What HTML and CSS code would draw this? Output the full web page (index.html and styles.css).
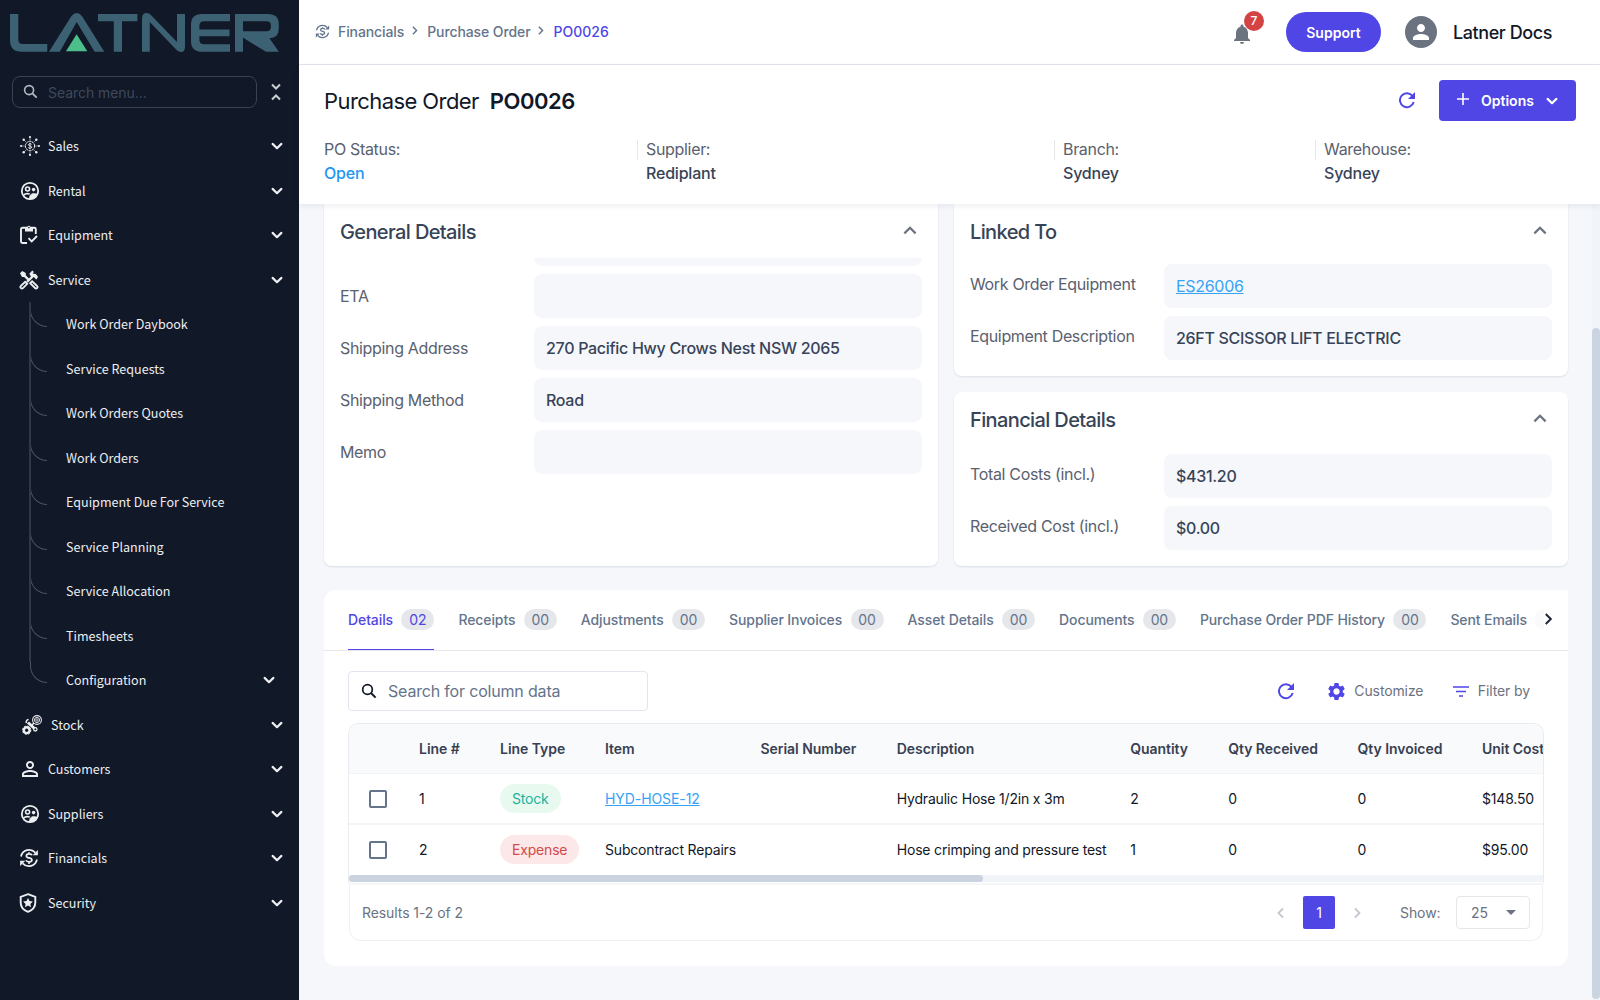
FILE: index.html
```html
<!DOCTYPE html>
<html lang="en">
<head>
<meta charset="utf-8">
<title>Purchase Order PO0026</title>
<link rel="stylesheet" href="styles.css">
</head>
<body>
<svg class="sprite" aria-hidden="true">
  <symbol id="i-down" viewBox="0 0 16 16"><path d="M3.6 5.9 8 10.2l4.400-4.300" fill="none" stroke="currentColor" stroke-width="2.200" stroke-linecap="round" stroke-linejoin="round"/></symbol>
  <symbol id="i-up" viewBox="0 0 16 16"><path d="M3 11l5-5 5 5" fill="none" stroke="currentColor" stroke-width="2"/></symbol>
  <symbol id="i-right" viewBox="0 0 16 16"><path d="M6 3.500 10.500 8 6 12.500" fill="none" stroke="currentColor" stroke-width="1.800"/></symbol>
  <symbol id="i-left" viewBox="0 0 16 16"><path d="M10 3.500 5.500 8l4.500 4.500" fill="none" stroke="currentColor" stroke-width="1.800"/></symbol>
  <symbol id="i-search" viewBox="0 0 16 16"><circle cx="6.500" cy="6.500" r="4.800" fill="none" stroke="currentColor" stroke-width="1.700"/><path d="m10 10 4.600 4.600" stroke="currentColor" stroke-width="2"/></symbol>
  <symbol id="i-refresh" viewBox="0 0 18 18"><path d="M14.600 5A7 7 0 1 0 15.700 11" fill="none" stroke="currentColor" stroke-width="2"/><path d="M17 1v7h-7z" fill="currentColor"/></symbol>
  <symbol id="i-people" viewBox="0 0 20 20"><circle cx="10" cy="10" r="8.200" fill="none" stroke="currentColor" stroke-width="1.800"/><circle cx="7.600" cy="8" r="2" fill="none" stroke="currentColor" stroke-width="1.600"/><circle cx="13.600" cy="8.600" r="1.800" fill="currentColor"/><path d="M9.400 18c-.3-3.400 1.600-5.600 4.200-5.600 1.500 0 2.800.3 3.900.9-1.500 2.900-4.400 4.700-8.100 4.700z" fill="currentColor" stroke="currentColor" stroke-width=".6"/><path d="M3.500 14.200c1.500-1.600 4-1.800 6.300-1.200" fill="none" stroke="currentColor" stroke-width="1.600"/></symbol>
  <symbol id="i-clip" viewBox="0 0 20 20"><path d="M8 18H3.400A1.400 1.400 0 0 1 2 16.600V4.200A1.400 1.400 0 0 1 3.400 2.800h12a1.400 1.400 0 0 1 1.400 1.400V9" fill="none" stroke="currentColor" stroke-width="1.900"/><path d="M6 2h2.300a1.700 1.700 0 0 1 3.200 0H14v4.500H6z" fill="currentColor"/><circle cx="9.900" cy="2.600" r=".8" fill="#111827"/><path d="m9.500 13.200 3.200 3.200 5.300-5.400" fill="none" stroke="currentColor" stroke-width="1.900"/></symbol>
  <symbol id="i-tools" viewBox="0 0 20 20"><path d="M1 3.300 3.200 1l3.600 2v2.300l3.600 3.600-1.700 1.700-3.600-3.600H3z" fill="currentColor"/><path d="M8 12 14 6" stroke="currentColor" stroke-width="2.400"/><path d="m10.300 3.800 3-3.300 1.600 1.400L13.600 3.400l1 .3L16.800 4l2.200 2.800-1.500 2.600-1.400-.9-1.100-1.500-2.200.5-.900-.9z" fill="currentColor"/><path d="m1.800 16 4.400-4.200 2 2-4.200 4.200a1.450 1.450 0 0 1-2.200-2zM11.200 13.200l1.900-1.900 5 4.700a1.450 1.450 0 0 1-2.100 2z" fill="none" stroke="currentColor" stroke-width="1.800"/></symbol>
  <symbol id="i-sales" viewBox="0 0 20 20"><g fill="none" stroke="currentColor"><circle cx="10" cy="10" r="4.600" stroke-width="1" stroke-dasharray="2.400 .5"/><path d="M10 5V2M10 15v3M5 10H2M15 10h3M6.500 6.500 4 4M13.500 6.500 16 4M6.500 13.500 4 16M13.500 13.500 16 16" stroke-width=".5"/><path d="M11.600 8.300c-.5-.8-3.100-.9-3.200.4 0 1.500 3.300.9 3.300 2.500 0 1.500-2.900 1.400-3.500.4M10 6.700v6.600" stroke-width=".9"/></g><g fill="currentColor"><circle cx="10" cy="1.100" r="1.100"/><circle cx="10" cy="18.900" r="1.100"/><circle cx="1.100" cy="10" r="1.100"/><circle cx="18.900" cy="10" r="1.100"/><circle cx="3.700" cy="3.700" r="1.200"/><circle cx="16.300" cy="3.700" r="1.200"/><circle cx="3.700" cy="16.300" r="1.200"/><circle cx="16.300" cy="16.300" r="1.200"/></g></symbol>
  <symbol id="i-stock" viewBox="0 0 20 20"><circle cx="4.700" cy="15.200" r="2.900" fill="none" stroke="currentColor" stroke-width="2.400"/><circle cx="4.700" cy="15.200" r="4.200" fill="none" stroke="currentColor" stroke-width="1" stroke-dasharray="1.700 1.600"/><path d="m6 7.500 6.500 6" stroke="currentColor" stroke-width="3"/><path d="M4.600 8.200a2.300 2.300 0 0 1 2-3.600" fill="none" stroke="currentColor" stroke-width="1.500"/><circle cx="13.300" cy="14.300" r="1.700" fill="none" stroke="currentColor" stroke-width="1.300"/><circle cx="15" cy="5" r="4.400" fill="none" stroke="currentColor" stroke-width="1.100"/><circle cx="15" cy="5" r="2.600" fill="none" stroke="currentColor" stroke-width=".9"/><circle cx="15" cy="5" r="1.200" fill="none" stroke="currentColor" stroke-width=".8"/><path d="m12 8-3 3" stroke="currentColor" stroke-width="1.500"/></symbol>
  <symbol id="i-person" viewBox="4 4 16 16"><path fill="currentColor" d="M12 5.900c1.160 0 2.100.94 2.100 2.100s-.94 2.100-2.100 2.100S9.900 9.160 9.900 8s.94-2.100 2.100-2.100m0 9c2.970 0 6.100 1.460 6.100 2.100v1.100H5.900V17c0-.64 3.130-2.100 6.100-2.100M12 4C9.790 4 8 5.790 8 8s1.790 4 4 4 4-1.790 4-4-1.790-4-4-4zm0 9c-2.670 0-8 1.340-8 4v3h16v-3c0-2.660-5.330-4-8-4z"/></symbol>
  <symbol id="i-money" viewBox="0 0 20 20"><g fill="none" stroke="currentColor" stroke-width="1.700"><path d="M2 8.500A8.300 8.300 0 0 1 16.300 4.600M18 11.500A8.300 8.300 0 0 1 3.700 15.400"/><path d="M13 7.300c-.7-1.800-5.500-2-5.600.6 0 2.800 5.500 1.300 5.500 4.100 0 2.600-5.100 2.400-5.900.3M10 4.200v2M10 14v2"/></g><path d="M18.900 2v5.200h-5.200zM1.100 18v-5.200h5.200z" fill="currentColor"/></symbol>
  <symbol id="i-shield" viewBox="0 0 20 20"><path d="M10 1.200 17.300 3.800v5.800c0 4.500-3 7.700-7.300 9.200-4.300-1.500-7.300-4.700-7.300-9.200V3.800z" fill="none" stroke="currentColor" stroke-width="1.900"/><path d="m10 5 1.500 3.100 3.400.4-2.500 2.400.6 3.400-3-1.700-3 1.700.6-3.400-2.500-2.400 3.400-.4z" fill="currentColor"/></symbol>
  <symbol id="i-gear" viewBox="0 0 24 24"><path fill="currentColor" d="M19.140 12.940c.04-.3.06-.61.06-.94 0-.32-.02-.64-.07-.94l2.030-1.580c.18-.14.23-.41.12-.61l-1.920-3.320c-.12-.22-.37-.29-.59-.22l-2.390.96c-.5-.38-1.030-.7-1.620-.94l-.36-2.540c-.04-.24-.24-.41-.48-.41h-3.840c-.24 0-.43.17-.47.41l-.36 2.540c-.59.24-1.130.57-1.620.94l-2.390-.96c-.22-.08-.47 0-.59.22L2.740 8.870c-.12.21-.08.47.12.61l2.030 1.580c-.05.3-.09.63-.09.94s.02.64.07.94l-2.030 1.580c-.18.14-.23.41-.12.61l1.920 3.320c.12.22.37.29.59.22l2.390-.96c.5.38 1.030.7 1.620.94l.36 2.540c.05.24.24.41.48.41h3.840c.24 0 .44-.17.47-.41l.36-2.540c.59-.24 1.130-.56 1.620-.94l2.390.96c.22.08.47 0 .59-.22l1.920-3.320c.12-.22.07-.47-.12-.61l-2.010-1.580zM12 15.600c-1.980 0-3.600-1.620-3.600-3.600s1.620-3.600 3.600-3.600 3.600 1.620 3.600 3.600-1.620 3.600-3.600 3.600z"/></symbol>
</svg>
<div class="app">
  <aside class="side">
    <svg class="logo" width="280" height="44" viewBox="6 10 280 44" role="img" aria-label="Latner">
      <g fill="#3c6172">
        <path d="M10 14h8.300v25.500q0 4.500 4.500 4.500H47.300v7.800H21.500Q10 51.800 10 40z"/>
        <path d="M49 51.800 71.300 16.200q5.400-6.400 10.800 0L104.300 51.800H94.600L76.700 22 59.800 51.800z"/>
        <path d="M98 14h39.400v7.300H122v30.500h-8.200V21.300H98z"/>
        <path d="M142 51.800V18.500q0-5.500 4.500-5.500 2.600 0 4.600 2.300L177 42V14h8v33q0 5-4 5-2.600 0-4.700-2.300L149.800 22v29.800z"/>
        <path d="M230 14H202q-11 0-11 10.500V41q0 10.800 11 10.800h28V44.200h-26q-4.600 0-4.600-4.200v-3.700H229.500v-6.800h-30.100V26q0-4.700 4.600-4.700h26z"/>
        <path d="M235 14h33q10.800 0 10.800 10v4.500q0 9.500-9.300 9.800L278.800 51.800H266L242.800 37.500V31.200h23.500q4.600 0 4.600-4v-2q0-3.900-4.600-3.900H243v30.500h-8z"/>
      </g>
      <path d="M76.600 34.300 87.300 51.300H66z" fill="#4cbf8b"/>
    </svg>
    <div class="menu-search">
      <div class="menu-input"><svg width="15" height="15"><use href="#i-search"/></svg><span>Search menu...</span></div>
      <svg width="12" height="18" viewBox="0 0 12 18" fill="none" stroke="#cbced4" stroke-width="2"><path d="m2 1.500 4 4 4-4M2 16.500l4-4 4 4"/></svg>
    </div>
    <nav class="nav">
      <div class="item"><svg class="ic"><use href="#i-sales"/></svg><span>Sales</span><svg class="ch"><use href="#i-down"/></svg></div>
      <div class="item"><svg class="ic"><use href="#i-people"/></svg><span>Rental</span><svg class="ch"><use href="#i-down"/></svg></div>
      <div class="item"><svg class="ic near"><use href="#i-clip"/></svg><span>Equipment</span><svg class="ch"><use href="#i-down"/></svg></div>
      <div class="item"><svg class="ic near"><use href="#i-tools"/></svg><span>Service</span><svg class="ch"><use href="#i-down"/></svg></div>
      <div class="sub">
        <div class="leaf"><i></i><span>Work Order Daybook</span></div>
        <div class="leaf"><i></i><span>Service Requests</span></div>
        <div class="leaf"><i></i><span>Work Orders Quotes</span></div>
        <div class="leaf"><i></i><span>Work Orders</span></div>
        <div class="leaf"><i></i><span>Equipment Due For Service</span></div>
        <div class="leaf"><i></i><span>Service Planning</span></div>
        <div class="leaf"><i></i><span>Service Allocation</span></div>
        <div class="leaf"><i></i><span>Timesheets</span></div>
        <div class="leaf"><i></i><span>Configuration</span><svg class="ch"><use href="#i-down"/></svg></div>
      </div>
      <div class="item stock"><svg class="ic"><use href="#i-stock"/></svg><span>Stock</span><svg class="ch"><use href="#i-down"/></svg></div>
      <div class="item"><svg class="ic small"><use href="#i-person"/></svg><span>Customers</span><svg class="ch"><use href="#i-down"/></svg></div>
      <div class="item"><svg class="ic"><use href="#i-people"/></svg><span>Suppliers</span><svg class="ch"><use href="#i-down"/></svg></div>
      <div class="item"><svg class="ic near"><use href="#i-money"/></svg><span>Financials</span><svg class="ch"><use href="#i-down"/></svg></div>
      <div class="item"><svg class="ic nearer"><use href="#i-shield"/></svg><span>Security</span><svg class="ch"><use href="#i-down"/></svg></div>
    </nav>
  </aside>
  <main class="main">
    <div class="topbar">
      <div class="crumbs">
        <svg class="cm" width="15" height="15"><use href="#i-money"/></svg>
        <span>Financials</span><svg class="cr"><use href="#i-right"/></svg>
        <span>Purchase Order</span><svg class="cr"><use href="#i-right"/></svg>
        <span class="here">PO0026</span>
      </div>
      <div class="user">
        <div class="bell"><svg width="24" height="24" viewBox="0 0 24 24"><path fill="#6b7280" d="M12 22c1.100 0 2-.9 2-2h-4c0 1.100.89 2 2 2zm6-6v-5c0-3.070-1.640-5.640-4.500-6.320V4c0-.83-.67-1.500-1.500-1.500s-1.500.67-1.500 1.500v.68C7.630 5.360 6 7.920 6 11v5l-2 2v1h16v-1l-2-2z"/></svg><b>7</b></div>
        <div class="support">Support</div>
        <div class="avatar"><svg width="24" height="24" viewBox="0 0 24 24"><path fill="#fff" d="M12 12c2.210 0 4-1.790 4-4s-1.790-4-4-4-4 1.790-4 4 1.790 4 4 4zm0 2c-2.670 0-8 1.340-8 4v2h16v-2c0-2.660-5.330-4-8-4z"/></svg></div>
        <span class="uname">Latner Docs</span>
      </div>
    </div>
    <header class="head">
      <div class="head-row">
        <h1><span>Purchase Order</span><b>PO0026</b></h1>
        <div class="head-act">
          <svg class="rf" width="18" height="18"><use href="#i-refresh"/></svg>
          <div class="options"><svg class="plus" width="14" height="14" viewBox="0 0 14 14"><path d="M7 1v12M1 7h12" stroke="#fff" stroke-width="1.600"/></svg><span>Options</span><svg width="16" height="16"><use href="#i-down"/></svg></div>
        </div>
      </div>
      <div class="facts">
        <div class="fact"><label>PO Status:</label><b class="open">Open</b></div>
        <div class="fact"><label>Supplier:</label><b>Rediplant</b></div>
        <div class="fact"><label>Branch:</label><b>Sydney</b></div>
        <div class="fact"><label>Warehouse:</label><b>Sydney</b></div>
      </div>
    </header>
    <div class="scroll">
      <div class="content">
        <div class="cards">
          <section class="card general">
            <h2><span>General Details</span><svg class="up"><use href="#i-up"/></svg></h2>
            <div class="fields clipped">
              <div class="field"><label></label><p></p></div>
              <div class="field"><label>ETA</label><p></p></div>
              <div class="field"><label>Shipping Address</label><p>270 Pacific Hwy Crows Nest NSW 2065</p></div>
              <div class="field"><label>Shipping Method</label><p>Road</p></div>
              <div class="field"><label>Memo</label><p></p></div>
            </div>
          </section>
          <div class="stack">
            <section class="card linked">
              <h2><span>Linked To</span><svg class="up"><use href="#i-up"/></svg></h2>
              <div class="fields">
                <div class="field"><label>Work Order Equipment</label><p><a>ES26006</a></p></div>
                <div class="field"><label>Equipment Description</label><p>26FT SCISSOR LIFT ELECTRIC</p></div>
              </div>
            </section>
            <section class="card fin">
              <h2><span>Financial Details</span><svg class="up"><use href="#i-up"/></svg></h2>
              <div class="fields">
                <div class="field"><label>Total Costs (incl.)</label><p>$431.20</p></div>
                <div class="field"><label>Received Cost (incl.)</label><p>$0.00</p></div>
              </div>
            </section>
          </div>
        </div>
        <section class="panel">
          <div class="tabs">
            <div class="tab on">Details<em>02</em></div>
            <div class="tab">Receipts<em>00</em></div>
            <div class="tab">Adjustments<em>00</em></div>
            <div class="tab">Supplier Invoices<em>00</em></div>
            <div class="tab">Asset Details<em>00</em></div>
            <div class="tab">Documents<em>00</em></div>
            <div class="tab">Purchase Order PDF History<em>00</em></div>
            <div class="tab">Sent Emails<em class="fade"></em></div>
            <svg class="more"><use href="#i-right"/></svg>
          </div>
          <div class="tools">
            <div class="search"><svg width="16" height="16"><use href="#i-search"/></svg><span>Search for column data</span></div>
            <div class="tool-act">
              <svg class="rf" width="18" height="18"><use href="#i-refresh"/></svg>
              <div class="act cust"><svg width="21" height="21"><use href="#i-gear"/></svg><span>Customize</span></div>
              <div class="act"><svg width="16" height="12" viewBox="0 0 16 12"><path d="M0 2h16M3 6.500h10M6 11h4" stroke="currentColor" stroke-width="1.700"/></svg><span>Filter by</span></div>
            </div>
          </div>
          <div class="table">
            <div class="tr th"><span></span><span>Line #</span><span>Line Type</span><span>Item</span><span>Serial Number</span><span>Description</span><span>Quantity</span><span>Qty Received</span><span>Qty Invoiced</span><span>Unit Cost</span></div>
            <div class="tr"><span class="ck"><i></i></span><span>1</span><span><mark class="green">Stock</mark></span><span><a>HYD-HOSE-12</a></span><span></span><span>Hydraulic Hose 1/2in x 3m</span><span>2</span><span>0</span><span>0</span><span>$148.50</span></div>
            <div class="tr last"><span class="ck"><i></i></span><span>2</span><span><mark class="red">Expense</mark></span><span>Subcontract Repairs</span><span></span><span>Hose crimping and pressure test</span><span>1</span><span>0</span><span>0</span><span>$95.00</span></div>
            <div class="hbar"><i></i></div>
          </div>
          <div class="pager">
            <span>Results 1-2 of 2</span>
            <div class="pages">
              <svg class="pg"><use href="#i-left"/></svg><b>1</b><svg class="pg"><use href="#i-right"/></svg>
              <span class="show">Show:</span>
              <div class="select"><span>25</span><svg width="10" height="5" viewBox="0 0 10 5"><path d="M0 0h10L5 5z" fill="#6b7280"/></svg></div>
            </div>
          </div>
        </section>
      </div>
      <div class="vbar"><i></i></div>
    </div>
  </main>
</div>
</body>
</html>
```
FILE: styles.css
```css
* { box-sizing: border-box; margin: 0; padding: 0; }
body { width: 1600px; height: 1000px; overflow: hidden; font-family: Inter, "Liberation Sans", sans-serif; font-size: 14px; color: #111827; }
svg { display: block; flex: none; }
b { font-weight: 600; }
a { color: #38a3f5; text-decoration: underline; }
.sprite { position: absolute; width: 0; height: 0; }
.app { display: flex; height: 1000px; }

/* Sidebar */
.side { width: 299px; flex: none; background: #111827; color: #eceef1; }
.logo { margin: 10px 0 0 6px; }
.menu-search { display: flex; align-items: center; gap: 13px; margin: 22px 0 0 12px; }
.menu-input { display: flex; align-items: center; gap: 10px; width: 245px; height: 32px; padding-left: 10px; border: 1px solid #3b4250; border-radius: 8px; color: #b4b8c0; }
.menu-input span { color: #3f495a; letter-spacing: -.05px; }
.menu-input svg { margin-bottom: 2px; }
.nav { margin-top: 16px; font-family: "Noto Sans CJK SC", sans-serif; font-size: 12.550px; }
.item, .leaf { display: flex; align-items: center; height: 44.500px; }
.item span, .leaf span { padding-bottom: 1px; }
.item { padding-left: 20px; }
.item .ic { width: 20px; height: 20px; margin-right: 8px; }
.item .ic.near { margin: 0 9px 0 -1px; }
.item .ic.nearer { margin: 0 10px 0 -2px; }
.item .ic.small { width: 16px; height: 16px; margin: 0 10px 0 2px; }
.item.stock .ic { margin: 0 9px 0 22px; }
.item.stock { padding-left: 0; }
.ch { width: 16px; height: 16px; margin-left: auto; }
.item .ch { margin-right: 14px; }
.leaf .ch { margin-right: 22px; }
.sub { position: relative; }
.sub::before { content: ""; position: absolute; left: 29px; top: 0; width: 2px; height: 360px; background: #303746; }
.leaf i { align-self: flex-start; width: 17px; height: 25px; margin: 0 19px 0 30px; border-left: 1px solid #4b5260; border-bottom: 1px solid #4b5260; border-bottom-left-radius: 17px; }

/* Top bar */
.main { width: 1301px; display: flex; flex-direction: column; }
.topbar { height: 65px; flex: none; display: flex; align-items: center; justify-content: space-between; padding: 0 48px 0 16px; background: #fff; border-bottom: 1px solid #e2e5f0; }
.crumbs { display: flex; align-items: center; color: #64748b; font-weight: 500; font-size: 14px; letter-spacing: -.1px; padding-bottom: 2px; }
.cm { margin-right: 8px; }
.cr { width: 13px; height: 13px; margin: 0 6px 2px 4px; }
.here { color: #4f46e5; letter-spacing: 0; }
.user { display: flex; align-items: center; }
.bell { position: relative; margin: 3px 32px 0 0; }
.bell b { position: absolute; left: 14px; top: -11px; width: 20px; height: 20px; border-radius: 50%; background: #d34343; color: #fff; font-size: 12px; line-height: 20px; text-align: center; font-weight: 500; }
.support { width: 95px; height: 40px; border-radius: 20px; background: #4f46e5; color: #fff; font-weight: 600; line-height: 41px; text-align: center; }
.avatar { width: 32px; height: 32px; border-radius: 50%; background: #6b7280; margin: 0 16px 0 24px; padding: 4px; }
.uname { font-size: 18px; font-weight: 500; letter-spacing: -.42px; }

/* Record header */
.head { position: relative; z-index: 1; height: 139px; flex: none; background: #fff; box-shadow: 0 2px 6px rgba(30, 41, 59, .08); padding: 15px 24px 0 25px; }
.head-row, .head-act, h1 { display: flex; align-items: center; }
.head-row { justify-content: space-between; }
h1 { gap: 11px; font-size: 22px; font-weight: 400; letter-spacing: -.58px; }
h1 b { letter-spacing: -.45px; }
.rf { color: #4f46e5; }
.head-act { gap: 23px; }
.head-act .rf { margin-bottom: 2px; }
.options { display: flex; align-items: center; width: 137px; height: 41px; border-radius: 4px; background: #4f46e5; color: #fff; font-weight: 600; padding-left: 17px; }
.options .plus { margin-bottom: 3px; }
.options span { margin: 0 10px 0 11px; }
.facts { display: grid; grid-template-columns: 313px 417px 261px 1fr; margin: 16px 0 0; font-size: 16px; }
.fact { display: flex; flex-direction: column; line-height: 24px; color: #374151; letter-spacing: -.2px; }
.fact + .fact { padding-left: 9px; background: linear-gradient(#e5e7eb, #e5e7eb) 0 3px / 1px 20px no-repeat; }
.fact label { color: #5a616e; letter-spacing: -.32px; }
.fact b { font-weight: 500; color: #374357; }
.fact .open { color: #2196f3; }

/* Content */
.scroll { flex: 1; display: flex; background: #f5f7fb; min-height: 0; }
.content { flex: 1; min-width: 0; padding: 0 24px 0 25px; }
.vbar { width: 8px; flex: none; background: #f1f5f9; padding-top: 124px; }
.vbar i { display: block; height: 671px; border-radius: 4px; background: #cbd5e1; }
.cards { display: flex; gap: 16px; height: 362px; }
.card { background: #fff; border-radius: 8px; box-shadow: 0 1px 2px rgba(30, 60, 90, .12); padding: 0 16px; }
.general { width: 614px; border-radius: 0 0 8px 8px; }
.stack { width: 614px; display: flex; flex-direction: column; gap: 16px; }
.linked { height: 172px; border-radius: 0 0 8px 8px; }
.fin { height: 174px; }
h2 { display: flex; align-items: center; justify-content: space-between; height: 54px; padding: 2px 3px 0 0; font-size: 20px; font-weight: 500; letter-spacing: -.62px; color: #374357; }
.fin h2 { height: 56px; padding-top: 0; }
.up { width: 18px; height: 18px; margin-bottom: 4px; color: #6b7280; }
.fields { display: grid; gap: 8px; padding-top: 6px; }
.fields.clipped { padding-top: 0; }
.field { display: flex; align-items: center; height: 44px; font-size: 16px; color: #5a616e; letter-spacing: -.34px; }
.field label { width: 194px; }
.field p { flex: none; width: 388px; height: 44px; border-radius: 8px; background: #f5f7fb; line-height: 44px; padding-left: 12px; color: #374357; font-weight: 500; letter-spacing: -.3px; }
.field a { font-weight: 400; }
.clipped .field:first-child, .clipped .field:first-child p { height: 8px; border-radius: 0 0 8px 8px; }
.stack label { padding-bottom: 4px; }

/* Records panel */
.panel { height: 376px; margin-top: 24px; border-radius: 12px 0 12px 12px; background: #fff; }
.tabs { display: flex; gap: 24px; height: 61px; padding-left: 24px; border-bottom: 1px solid #e5e7eb; color: #64748b; font-weight: 500; letter-spacing: -.1px; }
.tab { display: flex; align-items: center; height: 60px; flex: none; white-space: nowrap; border-bottom: 1px solid transparent; }
.tab em { width: 33px; height: 21px; margin-left: 8.400px; border-radius: 11px; background: #e5e7eb; font-style: normal; font-weight: 400; line-height: 21px; text-align: center; }
.tab em.fade { width: 9px; border-radius: 11px 0 0 11px; background: #fafafa; }
.tab.on { color: #4f46e5; border-bottom-color: #4f46e5; }
.more { width: 18px; height: 18px; margin: 20px 0 0 -29.500px; color: #1f2937; }
.tools { display: flex; justify-content: space-between; align-items: center; margin: 20px 38px 12px 24px; }
.search { display: flex; align-items: center; gap: 11px; width: 300px; height: 40px; padding-left: 12px; border: 1px solid #e2e5ee; border-radius: 4px; color: #64748b; font-size: 16px; letter-spacing: -.18px; }
.search svg { color: #111827; }
.tool-act, .act { display: flex; align-items: center; color: #6b7280; letter-spacing: -.12px; }
.cust { margin: 0 30px 0 31px; }
.act span { margin-left: 8.500px; padding-bottom: 1px; }
.cust span { margin-left: 7px; }
.act svg { color: #4f46e5; }
.table { margin: 0 24px; border: 1px solid #e8ebf0; border-bottom: 0; border-radius: 10px 10px 0 0; overflow: hidden; }
.tr { display: grid; grid-template-columns: 58px 81px 105px 155.500px 136.200px 233.500px 98px 129.300px 124.500px 110px; height: 51px; border-bottom: 2px solid #f3f4f6; letter-spacing: -.18px; }
.tr.last { border-bottom: 0; height: 50px; padding-bottom: 1px; }
.tr a { letter-spacing: -.08px; }
.tr > span { display: flex; align-items: center; padding-left: 12px; white-space: nowrap; }
.th { height: 50px; background: #f9fafc; border-bottom: 1px solid #f3f4f6; font-weight: 600; color: #374151; letter-spacing: -.04px; }
.tr > .ck { padding-left: 20px; }
.ck i { width: 18px; height: 18px; border: 2px solid #64748b; border-radius: 2px; }
mark { height: 29px; border-radius: 15px; padding: 0 12px; line-height: 30px; }
.green { background: #e8faf0; color: #1cb29c; }
.red { background: #fce8e8; color: #d34a4a; }
.hbar { height: 7px; margin-bottom: 1px; background: #f1f4f9; }
.hbar i { display: block; width: 634px; height: 7px; border-radius: 4px; background: #cbd3e0; }
.pager { display: flex; align-items: center; justify-content: space-between; height: 58px; margin: 0 25px; padding: 0 12px; border: 1px solid #eef0f3; border-top: 2px solid #f5f6f8; border-radius: 0 0 12px 12px; color: #6b7280; letter-spacing: -.08px; }
.pages { display: flex; align-items: center; }
.pages b { width: 32px; height: 33px; margin: 0 14px; background: #4f46e5; color: #fff; font-weight: 400; line-height: 33px; text-align: center; border-radius: 2px; }
.pg { width: 16px; height: 16px; color: #c3c8d0; }
.show { margin: 0 15.500px 0 35px; }
.select { display: flex; align-items: center; justify-content: space-between; width: 74px; height: 33px; padding: 0 13px 0 14px; border: 1px solid #e5e7eb; border-radius: 4px; }
```
